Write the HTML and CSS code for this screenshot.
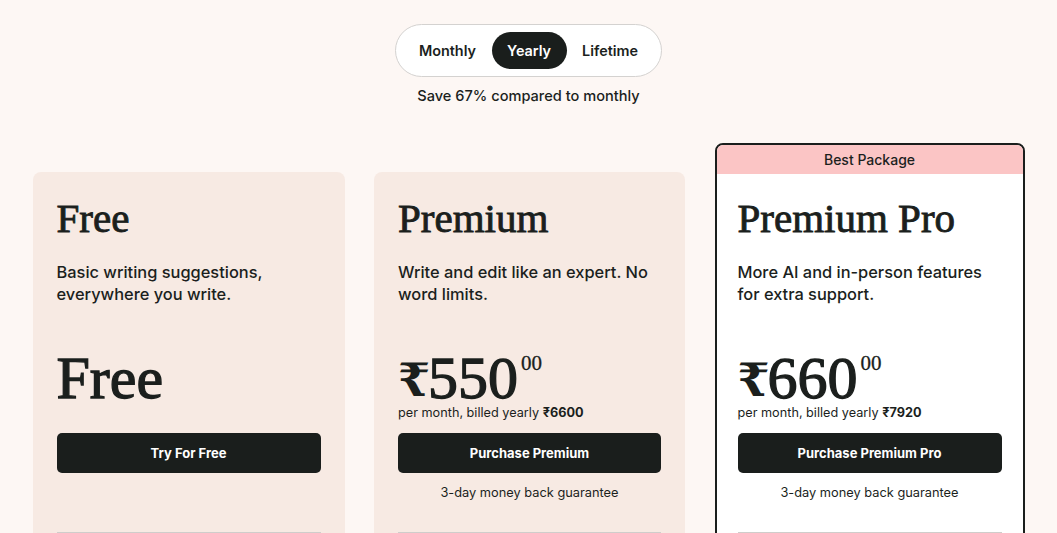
FILE: index.html
```html
<!DOCTYPE html>
<html lang="en">
<head>
<meta charset="utf-8">
<title>Pricing</title>
<link rel="stylesheet" href="styles.css">
</head>
<body>
<main class="page">
  <header class="billing">
    <div class="toggle">
      <span class="toggle-item">Monthly</span>
      <span class="toggle-item active">Yearly</span>
      <span class="toggle-item">Lifetime</span>
    </div>
    <p class="save">Save 67% compared to monthly</p>
  </header>

  <section class="plans">
    <article class="card">
      <div class="card-body">
        <h2 class="plan-name">Free</h2>
        <p class="plan-desc">Basic writing suggestions, everywhere you write.</p>
        <div class="price-area">
          <div class="price">Free</div>
        </div>
        <button class="cta">Try For Free</button>
        <p class="guarantee"></p>
        <hr class="divider">
      </div>
    </article>

    <article class="card">
      <div class="card-body">
        <h2 class="plan-name">Premium</h2>
        <p class="plan-desc">Write and edit like an expert. No word limits.</p>
        <div class="price-area">
          <div class="price"><span class="rupee">₹</span>550<sup class="cents">00</sup></div>
          <p class="billed">per month, billed yearly <strong>₹6600</strong></p>
        </div>
        <button class="cta">Purchase Premium</button>
        <p class="guarantee">3-day money back guarantee</p>
        <hr class="divider">
      </div>
    </article>

    <article class="card featured">
      <div class="badge">Best Package</div>
      <div class="card-body">
        <h2 class="plan-name">Premium Pro</h2>
        <p class="plan-desc">More AI and in-person features for extra support.</p>
        <div class="price-area">
          <div class="price"><span class="rupee">₹</span>660<sup class="cents">00</sup></div>
          <p class="billed">per month, billed yearly <strong>₹7920</strong></p>
        </div>
        <button class="cta">Purchase Premium Pro</button>
        <p class="guarantee">3-day money back guarantee</p>
        <hr class="divider">
      </div>
    </article>
  </section>
</main>
</body>
</html>
```

FILE: styles.css
```css
* { box-sizing: border-box; }

html, body {
  margin: 0;
  padding: 0;
  background: #fdf7f4;
  color: #1b1f1d;
  font-family: "Inter", "Noto Sans", sans-serif;
  overflow: hidden;
}

.page {
  padding-top: 24px;
}

.billing {
  display: flex;
  flex-direction: column;
  align-items: center;
}

.toggle {
  display: flex;
  align-items: center;
  padding: 7px;
  height: 53px;
  background: #ffffff;
  border: 1px solid #d4d2d0;
  border-radius: 27px;
}

.toggle-item {
  display: flex;
  align-items: center;
  height: 37px;
  padding: 0 15.5px;
  font-size: 14.4px;
  font-weight: 600;
  color: #1b1f1d;
  border-radius: 19px;
}

.toggle-item.active {
  background: #1a1e1c;
  color: #ffffff;
}

.save {
  margin: 9px 0 0;
  font-size: 14.6px;
  line-height: 20px;
  font-weight: 500;
}

.plans {
  width: 992px;
  margin: 66px auto 0;
  display: grid;
  grid-template-columns: 312px 311px 310px;
  column-gap: 29.5px;
  align-items: start;
}

.card {
  background: #f7eae3;
  border-radius: 8px;
}

.card-body {
  padding: 24px 24px 60px;
}

.featured {
  margin-top: -29px;
  background: #ffffff;
  border: 2px solid #1a1e1c;
  overflow: hidden;
}

.featured .card-body {
  padding: 22px 21px 58px;
}

.badge {
  height: 29px;
  background: #fbc5c5;
  display: flex;
  align-items: center;
  justify-content: center;
  font-size: 14px;
  font-weight: 500;
}

.plan-name {
  margin: 0;
  font-family: "Liberation Serif", "Times New Roman", serif;
  font-weight: 400;
  font-size: 41px;
  line-height: 44px;
  -webkit-text-stroke: 0.9px currentColor;
}

.plan-desc {
  margin: 21px 0 0;
  height: 91px;
  font-size: 16.4px;
  line-height: 22px;
  font-weight: 500;
}

.price-area {
  height: 81px;
}

.price {
  height: 52px;
  font-family: "Liberation Serif", "Times New Roman", serif;
  font-weight: 400;
  font-size: 60px;
  line-height: 52px;
  -webkit-text-stroke: 1.3px currentColor;
  display: flex;
  align-items: flex-start;
}

.rupee {
  font-family: "DejaVu Serif", serif;
  font-weight: 700;
  font-size: 46px;
  line-height: 52px;
  padding-top: 2px;
  -webkit-text-stroke: 0;
  margin-right: -2px;
}

.cents {
  font-size: 21px;
  line-height: 20px;
  font-weight: 400;
  -webkit-text-stroke: 0.3px currentColor;
  margin-left: 3px;
  margin-top: 1px;
  vertical-align: top;
}

.billed {
  margin: 0;
  font-size: 12.7px;
  line-height: 17px;
  font-weight: 400;
}

.billed strong {
  font-weight: 700;
}

.cta {
  display: block;
  width: 100%;
  height: 40px;
  border: none;
  border-radius: 5px;
  background: #1a1e1c;
  color: #ffffff;
  font-family: "Inter", "Noto Sans", sans-serif;
  font-size: 13px;
  font-weight: 700;
  cursor: pointer;
}

.guarantee {
  margin: 11px 0 0;
  height: 18px;
  text-align: center;
  font-size: 12.8px;
  line-height: 18px;
}

.divider {
  margin: 30px 0 0;
  border: none;
  border-top: 2px solid #cfcdcb;
}
```
